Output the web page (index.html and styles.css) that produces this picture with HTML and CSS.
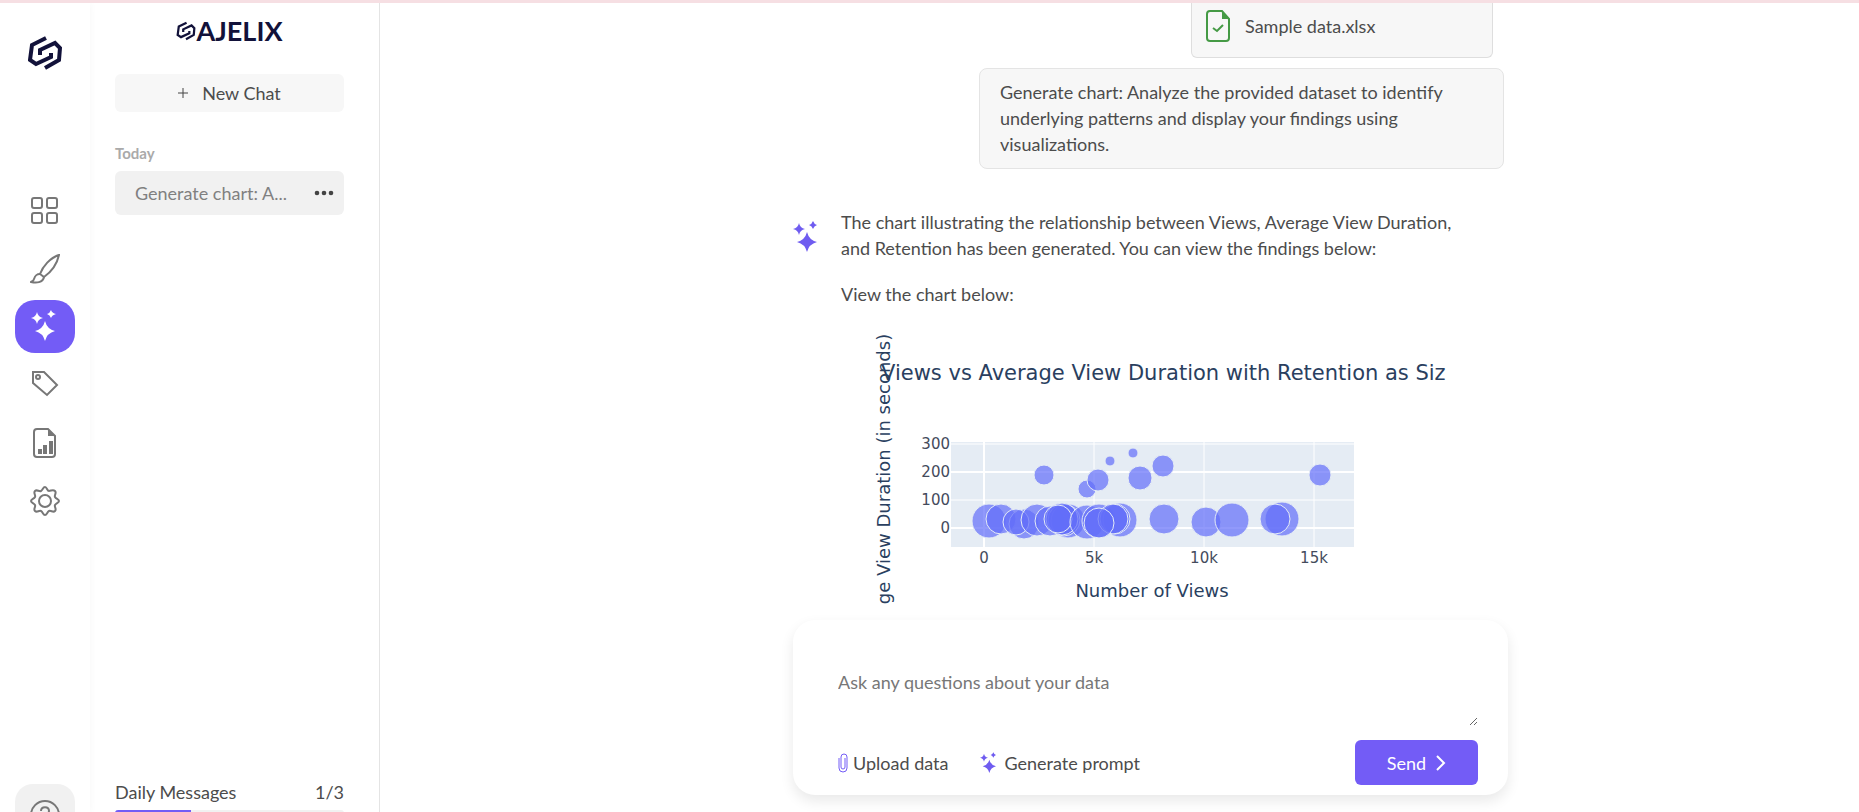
FILE: index.html
```html
<!DOCTYPE html>
<html lang="en">
<head>
    <meta charset="UTF-8">
    <meta name="viewport" content="width=device-width, initial-scale=1.0">
    <title>Ajelix AI Data Analyst</title>
    <link rel="stylesheet" href="styles.css">
</head>
<body>
    <!-- Shared icons -->
    <svg class="sprite" aria-hidden="true">
        <symbol id="logo-mark" viewBox="0 0 34 36">
            <path d="M18 3 4 10 2 25l6 4 15-7v-4" />
            <path d="M17 33l14-8 1-12-5-5-15 7v5" />
        </symbol>
        <symbol id="sparkles" viewBox="0 0 24 32">
            <path d="M14 11q2 8 10 10q-8 2-10 10q-2-8-10-10q8-2 10-10z" />
            <path d="M6 2q1 5 6 6q-5 1-6 6q-1-5-6-6q5-1 6-6z" />
            <path d="M20 0q1 3 4 4q-3 1-4 4q-1-3-4-4q3-1 4-4z" />
        </symbol>
    </svg>

    <div class="app">
        <nav class="rail">
            <a class="rail-logo" href="#" aria-label="Home">
                <svg class="mark" width="34" height="36"><use href="#logo-mark" /></svg>
            </a>
            <a class="rail-link" href="#" aria-label="Dashboard">
                <svg width="30" height="30" viewBox="0 0 30 30">
                    <rect x="2" y="2" width="10" height="10" rx="2" />
                    <rect x="17" y="2" width="10" height="10" rx="2" />
                    <rect x="2" y="17" width="10" height="10" rx="2" />
                    <rect x="17" y="17" width="10" height="10" rx="2" />
                </svg>
            </a>
            <a class="rail-link" href="#" aria-label="Design">
                <svg width="30" height="30" viewBox="0 0 30 30">
                    <path d="M29 1C20 4 13 12 10 20l4 3C21 18 27 10 29 1z" />
                    <path d="M10 20c-4 0-5 2-6 5 0 1-1 2-3 3 5 1 12 1 13-5" />
                </svg>
            </a>
            <a class="rail-link active" href="#" aria-label="AI chat">
                <svg width="30" height="34" viewBox="0 0 30 34">
                    <path d="M15 11q2 8 10 10q-8 2-10 10q-2-8-10-10q8-2 10-10z" />
                    <path d="M7 2q1 5 6 6q-5 1-6 6q-1-5-6-6q5-1 6-6z" />
                    <path d="M21 0q1 3 5 4q-4 1-5 4q-1-3-4-4q3-1 4-4z" />
                </svg>
            </a>
            <a class="rail-link" href="#" aria-label="Pricing">
                <svg width="30" height="30" viewBox="0 0 30 30">
                    <path d="M3 2h11l13 13-10 10L3 13z" />
                    <circle cx="8" cy="7" r="2" />
                </svg>
            </a>
            <a class="rail-link" href="#" aria-label="Reports">
                <svg width="30" height="30" viewBox="0 0 30 30">
                    <path d="M18 1H7a3 3 0 0 0-3 3v22a3 3 0 0 0 3 3h15a3 3 0 0 0 3-3V8z" />
                    <path class="solid" d="M18 1v7h7zM8 21h4v5H8zM13 17h4v9h-4zM19 13h4v13h-4z" />
                </svg>
            </a>
            <a class="rail-link" href="#" aria-label="Settings">
                <svg width="30" height="30" viewBox="0 0 30 30">
                    <path d="M15 1c2 0 2 4 4 4s4-2 6 0-1 4 0 6 4 2 4 4-3 2-4 4 2 4 0 6-4-1-6 0-2 4-4 4-2-3-4-4-4 2-6 0 1-4 0-6-4-2-4-4 3-2 4-4-2-4 0-6 4 1 6 0 2-4 4-4z" />
                    <circle cx="15" cy="15" r="6" />
                </svg>
            </a>
            <button class="help" type="button" aria-label="Help">
                <svg width="32" height="32" viewBox="0 0 32 32">
                    <circle cx="16" cy="16" r="14" />
                    <path d="M12 12c0-5 8-5 8 0 0 3-4 3-4 7M16 23v1" />
                </svg>
            </button>
        </nav>

        <aside class="sidebar">
            <a class="brand" href="#">
                <svg class="mark" width="20" height="20"><use href="#logo-mark" /></svg>
                <span>AJELIX</span>
            </a>
            <button class="new-chat" type="button">
                <svg width="10" height="10" viewBox="0 0 10 10"><path d="M5 0v10M0 5h10" /></svg>
                New Chat
            </button>
            <h2 class="group">Today</h2>
            <div class="history">
                <a href="#">Generate chart: A...</a>
                <button class="more" type="button" aria-label="More options">
                    <svg width="20" height="6" viewBox="0 0 20 6">
                        <circle cx="3" cy="3" r="2.300" />
                        <circle cx="10" cy="3" r="2.300" />
                        <circle cx="17" cy="3" r="2.300" />
                    </svg>
                </button>
            </div>
            <div class="usage">
                <span id="usage-label">Daily Messages</span>
                <span>1/3</span>
            </div>
            <div class="usage-bar" role="progressbar" aria-labelledby="usage-label" aria-valuenow="1" aria-valuemin="0" aria-valuemax="3">
                <div class="usage-fill" style="width: 33%"></div>
            </div>
        </aside>

        <main class="chat">
            <section class="messages">
                <div class="file-card">
                    <svg width="24" height="32" viewBox="0 0 24 32">
                        <path d="M16 1H4a3 3 0 0 0-3 3v24a3 3 0 0 0 3 3h16a3 3 0 0 0 3-3V9z" />
                        <path class="solid" d="M16 1v8h7z" />
                        <path d="M7 18l4 3 6-6" />
                    </svg>
                    <span>Sample data.xlsx</span>
                </div>
                <p class="question">Generate chart: Analyze the provided dataset to identify underlying patterns and display your findings using visualizations.</p>

                <div class="answer">
                    <svg class="spark" width="24" height="32"><use href="#sparkles" /></svg>
                    <div class="answer-body">
                        <p>The chart illustrating the relationship between Views, Average View Duration, and Retention has been generated. You can view the findings below:</p>
                        <p>View the chart below:</p>
                        <svg class="chart" width="612" height="286" viewBox="0 0 612 286" role="img" aria-label="Views vs Average View Duration">
                            <rect class="plot" x="110" y="122" width="403" height="105" />
                            <g class="grid">
                                <path d="M253 122v105M363 122v105M473 122v105M110 124h403M110 180h403" />
                                <path class="zero" d="M143 122v105M110 152h403M110 208h403" />
                            </g>
                            <g class="bubbles" id="bubbles"></g>
                            <g class="ticks">
                                <text x="143" y="243">0</text>
                                <text x="253" y="243">5k</text>
                                <text x="363" y="243">10k</text>
                                <text x="473" y="243">15k</text>
                            </g>
                            <g class="ticks ticks-y">
                                <text x="109" y="213">0</text>
                                <text x="109" y="185">100</text>
                                <text x="109" y="157">200</text>
                                <text x="109" y="129">300</text>
                            </g>
                            <text class="axis-title" x="311" y="277">Number of Views</text>
                            <text class="axis-title" transform="translate(49 149) rotate(-90)">ge View Duration (in seconds)</text>
                            <text class="chart-title" x="40" y="60">Views vs Average View Duration with Retention as Siz</text>
                        </svg>
                    </div>
                </div>
            </section>

            <form class="composer">
                <textarea aria-label="Question" placeholder="Ask any questions about your data"></textarea>
                <div class="actions">
                    <button class="action" type="button">
                        <svg class="clip" width="10" height="20" viewBox="0 0 10 20">
                            <path d="M1 5v10a4 4 0 0 0 8 0V4a3 3 0 0 0-6 0v10a2 2 0 0 0 4 0V5" />
                        </svg>
                        Upload data
                    </button>
                    <button class="action prompt" type="button">
                        <svg class="spark" width="16" height="22"><use href="#sparkles" /></svg>
                        Generate prompt
                    </button>
                    <button class="send" type="submit">
                        Send
                        <svg width="10" height="16" viewBox="0 0 10 16"><path d="M1 1l7 7-7 7" /></svg>
                    </button>
                </div>
            </form>
        </main>
    </div>

    <script src="chart.js"></script>
</body>
</html>
```
FILE: styles.css
```css
* {
    box-sizing: border-box;
}

body {
    margin: 0;
    font-family: Lato, sans-serif;
    font-size: 18px;
    line-height: 26px;
    color: #4c4c4c;
    background: #fff;
}

button, textarea {
    font: inherit;
    color: inherit;
    border: none;
    background: none;
    padding: 0;
}

button {
    cursor: pointer;
}

a {
    color: inherit;
    text-decoration: none;
}

svg {
    display: block;
    flex: none;
    fill: none;
    stroke-width: 2;
}

.sprite {
    position: absolute;
    width: 0;
    height: 0;
}

.mark {
    stroke: #12123a;
    stroke-width: 4;
}

.spark {
    fill: #6f5cf0;
}

.app {
    display: flex;
    height: 100vh;
    overflow: hidden;
    border-top: 3px solid #f6dfe3;
}

/* Icon rail */
.rail {
    display: flex;
    flex-direction: column;
    align-items: center;
    width: 90px;
    padding-top: 32px;
    box-shadow: 0 0 8px rgba(0, 0, 0, 0.04);
}

.rail-logo {
    margin-bottom: 113px;
}

.rail-link {
    display: flex;
    align-items: center;
    justify-content: center;
    flex: none;
    width: 60px;
    height: 53px;
    margin-bottom: 5px;
    stroke: #777;
}

.rail-link .solid {
    fill: #777;
    stroke: none;
}

.rail-link.active {
    border-radius: 20px;
    background: #735cf6;
    stroke: none;
}

.rail-link.active svg {
    fill: #fff;
}

.help {
    display: flex;
    justify-content: center;
    flex: none;
    width: 60px;
    height: 60px;
    margin-top: 252px;
    padding-top: 15px;
    border-radius: 18px;
    background: #f1f1f1;
    stroke: #777;
}

/* History */
.sidebar {
    display: flex;
    flex-direction: column;
    width: 290px;
    padding: 12px 35px 0 25px;
    border-right: 1px solid #e4e4e4;
}

.brand {
    display: flex;
    align-items: center;
    justify-content: center;
    height: 32px;
    font-size: 27px;
    font-weight: bold;
    color: #12123a;
}

.new-chat {
    display: flex;
    align-items: center;
    justify-content: center;
    gap: 14px;
    height: 38px;
    margin-top: 27px;
    border-radius: 6px;
    background: #f7f7f7;
}

.new-chat svg {
    stroke: #444;
    stroke-width: 1;
}

.group {
    margin: 28px 0 5px;
    font-size: 15px;
    font-weight: bold;
    color: #aaa;
}

.history {
    display: flex;
    align-items: center;
    justify-content: space-between;
    height: 44px;
    padding: 0 10px 0 20px;
    border-radius: 6px;
    background: #f1f1f1;
    color: #808080;
}

.more svg {
    fill: #444;
}

.usage {
    display: flex;
    justify-content: space-between;
    margin-top: auto;
    margin-bottom: 5px;
}

.usage-bar {
    flex: none;
    height: 6px;
    margin-bottom: -4px;
    border-radius: 3px;
    background: #f1f1f1;
    overflow: hidden;
}

.usage-fill {
    height: 100%;
    background: #735cf6;
}

/* Conversation */
.chat {
    display: flex;
    flex-direction: column;
    align-items: center;
    flex: 1;
    padding: 0 0 17px 62px;
}

.messages {
    display: flex;
    flex-direction: column;
    flex: 1;
    width: 100%;
    max-width: 715px;
    min-height: 0;
}

.file-card {
    display: flex;
    align-items: center;
    align-self: flex-end;
    gap: 15px;
    width: 302px;
    height: 55px;
    margin-right: 15px;
    padding: 0 14px 8px;
    border: 1px solid #dedede;
    border-top: none;
    border-radius: 0 0 6px 6px;
    background: #f7f7f7;
}

.file-card svg {
    stroke: #459a45;
}

.file-card .solid {
    fill: #459a45;
    stroke: none;
}

.question {
    align-self: flex-end;
    width: 525px;
    margin: 10px 4px 40px 0;
    padding: 10px 20px 11px;
    border: 1px solid #e4e4e4;
    border-radius: 8px;
    background: #f7f7f7;
}

.answer {
    display: flex;
    align-items: flex-start;
    gap: 24px;
}

.answer > .spark {
    margin-top: 12px;
}

.answer-body {
    width: 612px;
}

.answer-body p {
    margin: 0 0 20px;
}

/* Chart */
.chart {
    margin-top: -7px;
    font-family: "DejaVu Sans", Verdana, sans-serif;
}

.chart text {
    fill: #2a3f5f;
}

.plot {
    fill: #e5ecf4;
}

.grid {
    stroke: #fff;
    stroke-width: 1;
}

.zero {
    stroke-width: 2;
}

.bubbles {
    fill: #636efa;
    fill-opacity: 0.7;
    stroke: #e5ecf6;
    stroke-width: 1;
}

.chart .ticks text {
    fill: #444b5c;
}

.ticks {
    font-size: 15px;
    text-anchor: middle;
}

.ticks-y {
    text-anchor: end;
}

.axis-title {
    font-size: 18px;
    text-anchor: middle;
}

.chart-title {
    font-size: 21px;
}

/* Composer */
.composer {
    width: 100%;
    max-width: 715px;
    padding: 49px 30px 10px 45px;
    border-radius: 22px;
    background: #fff;
    box-shadow: 0 6px 14px rgba(0, 0, 0, 0.09);
}

.composer textarea {
    display: block;
    width: 100%;
    height: 57px;
    margin-bottom: 14px;
    outline: none;
    resize: vertical;
}

.composer textarea::placeholder {
    color: #777;
}

.actions {
    display: flex;
    align-items: center;
}

.action {
    display: flex;
    align-items: center;
    gap: 5px;
    margin-right: 32px;
}

.prompt {
    gap: 8px;
}

.clip {
    stroke: #735cf6;
    stroke-width: 1;
}

.send {
    display: flex;
    align-items: center;
    justify-content: center;
    gap: 10px;
    width: 123px;
    height: 45px;
    margin-left: auto;
    border-radius: 6px;
    background: #735cf6;
    color: #fff;
    stroke: #fff;
}
```
FILE: chart.js
```javascript
// x, y, radius of each video, in drawing order
const videos = [
    [148, 201, 17], [160, 199, 15], [183, 204, 15], [175, 202, 13], [196, 200, 16],
    [209, 201, 15], [227, 201, 17], [223, 200, 16], [221, 199, 16], [217, 199, 14],
    [246, 202, 17], [258, 201, 17], [279, 200, 17], [274, 199, 15], [272, 199, 15],
    [258, 203, 15], [323, 199, 15], [365, 202, 15], [391, 200, 17], [441, 199, 17],
    [434, 199, 15], [203, 155, 10], [246, 169, 9], [257, 160, 11], [269, 141, 5],
    [292, 133, 5], [299, 158, 12], [322, 146, 11], [479, 155, 11]
];

const group = document.getElementById("bubbles");

videos.forEach(([x, y, r]) => {
    const circle = document.createElementNS("http://www.w3.org/2000/svg", "circle");
    circle.setAttribute("cx", x);
    circle.setAttribute("cy", y);
    circle.setAttribute("r", r);
    group.appendChild(circle);
});
```
